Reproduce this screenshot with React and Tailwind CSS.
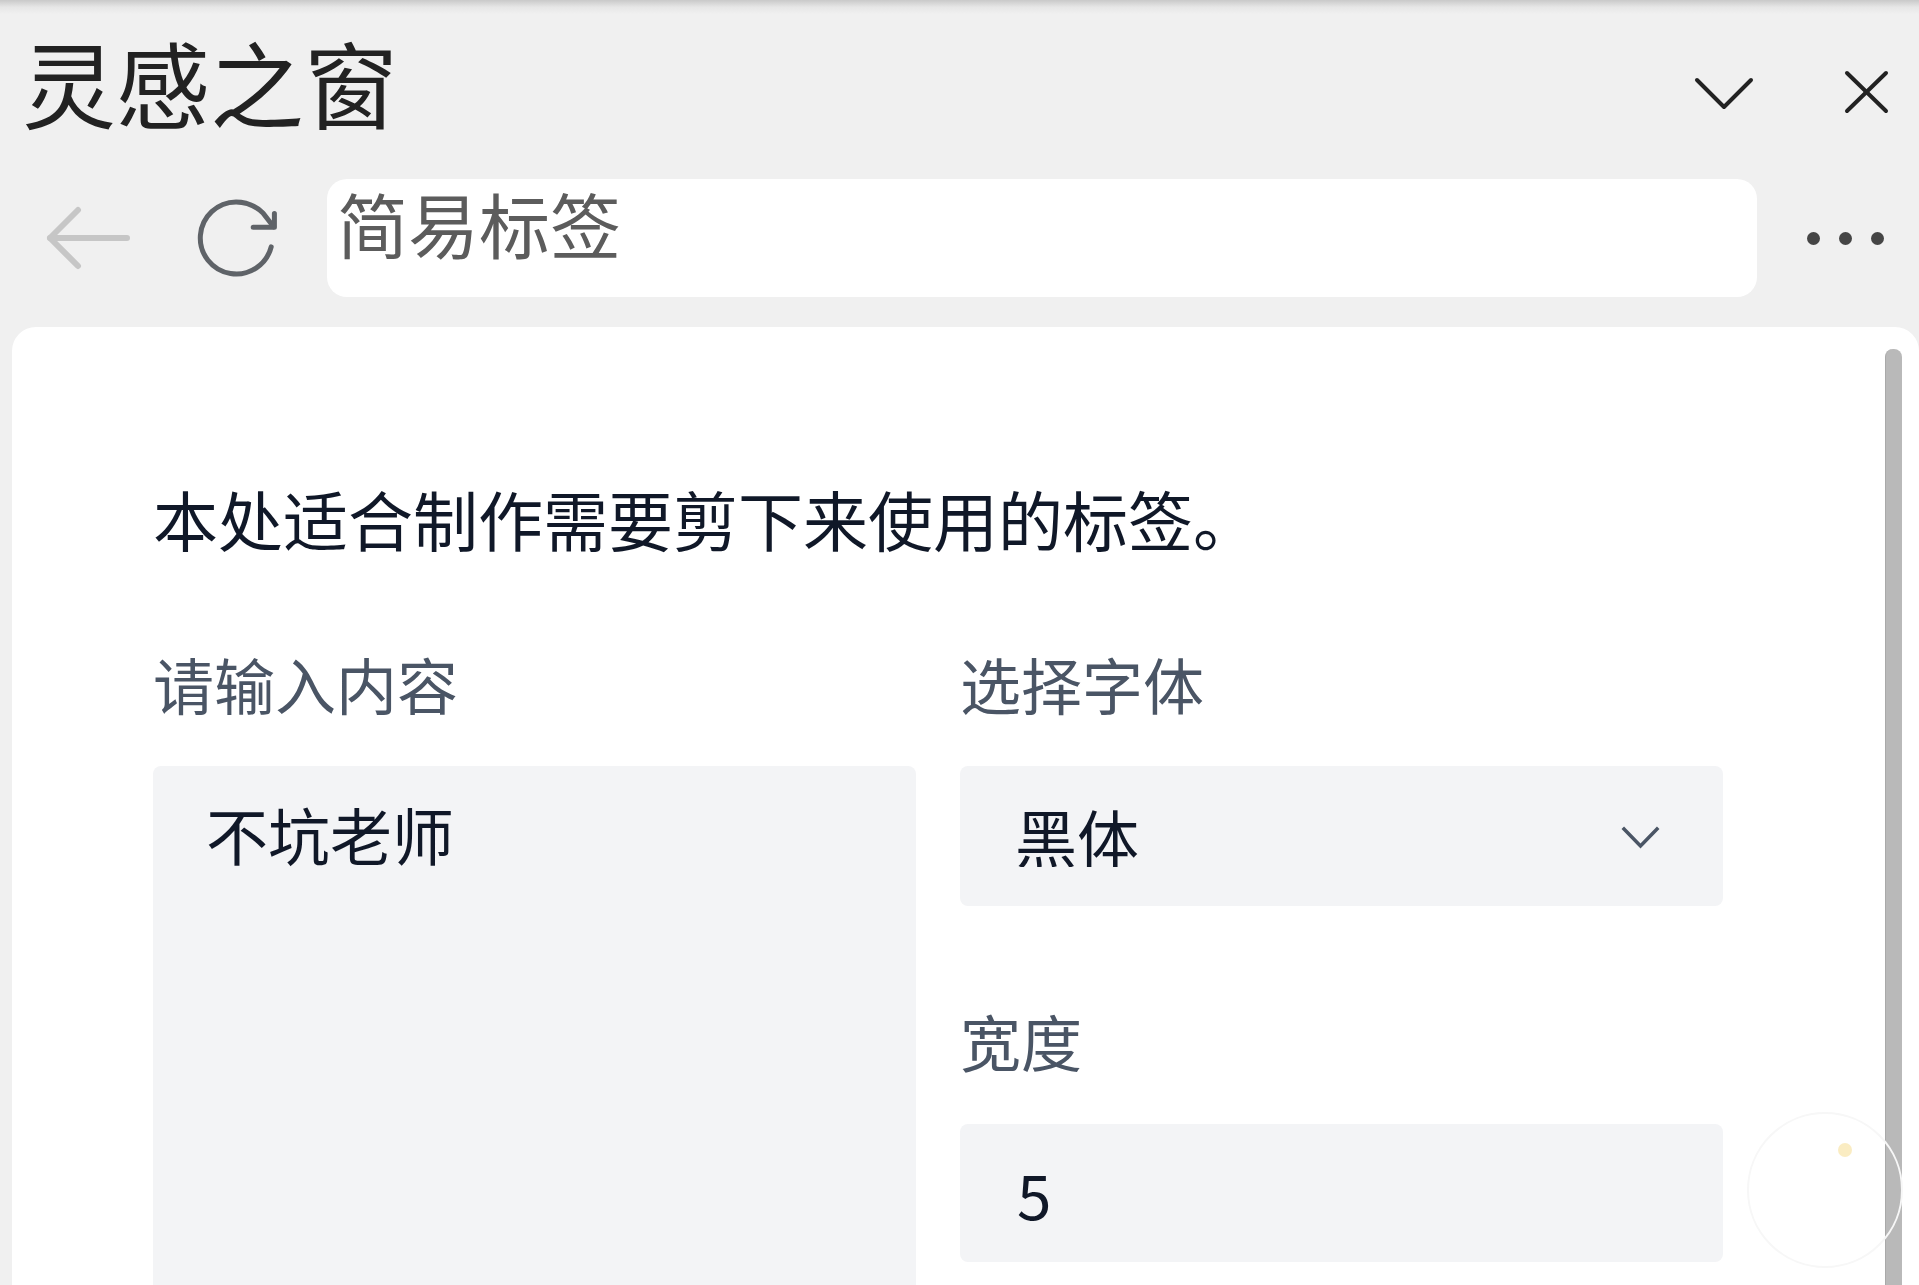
import React, { useState } from 'react';

const font = { fontFamily: '"Noto Sans CJK SC", "Noto Sans", sans-serif' };

const ChevronDown = ({ className }) => (
  <svg className={className} viewBox="0 0 62 35" fill="none" stroke="currentColor" strokeWidth="4" strokeLinecap="round" strokeLinejoin="round">
    <polyline points="4,4 31,31 58,4" />
  </svg>
);

const CloseIcon = ({ className }) => (
  <svg className={className} viewBox="0 0 47 46" fill="none" stroke="currentColor" strokeWidth="4" strokeLinecap="round">
    <line x1="4" y1="4" x2="43" y2="42" />
    <line x1="43" y1="4" x2="4" y2="42" />
  </svg>
);

const BackIcon = ({ className }) => (
  <svg className={className} viewBox="0 0 89 68" fill="none" stroke="currentColor" strokeWidth="6" strokeLinecap="round" strokeLinejoin="round">
    <line x1="6" y1="34" x2="83" y2="34" />
    <polyline points="34,6 6,34 34,62" />
  </svg>
);

const RefreshIcon = ({ className }) => (
  <svg className={className} viewBox="0 0 24 24" fill="none" stroke="currentColor" strokeWidth="1.25" strokeLinecap="round" strokeLinejoin="round">
    <path d="M20.8 14.2A9 9 0 1 1 12 3c2.52 0 4.93 1 6.74 2.74L21.4 9.2" />
    <path d="M21.6 5.9V9.3H16.3" />
  </svg>
);

const SelectChevron = ({ className }) => (
  <svg className={className} viewBox="0 0 39 25" fill="none" stroke="currentColor" strokeWidth="3.5" strokeLinecap="square">
    <polyline points="3,3 19.5,20 36,3" />
  </svg>
);

export default function App() {
  const [text, setText] = useState('不坑老师');
  const [fontName, setFontName] = useState('黑体');
  const [width, setWidth] = useState('5');

  return (
    <div className="relative w-[1919px] h-[1285px] bg-[#f0f0f0] overflow-hidden flex flex-col" style={font}>
      {/* top edge shadow */}
      <div className="h-[14px] shrink-0 bg-gradient-to-b from-[#c9c9c9] via-[#e6e6e6] to-[#f0f0f0]" />

      {/* title bar */}
      <div className="h-[165px] shrink-0 flex items-start">
        <h1 className="mt-[20px] pl-[22px] text-[94px] leading-none text-[#222222] font-normal">灵感之窗</h1>
        <div className="flex-1" />
        <button className="mt-[62px] text-[#222222]">
          <ChevronDown className="w-[62px] h-[35px]" />
        </button>
        <button className="mt-[55px] ml-[88px] mr-[29px] text-[#222222]">
          <CloseIcon className="w-[47px] h-[46px]" />
        </button>
      </div>

      {/* nav bar */}
      <div className="h-[118px] shrink-0 flex items-center">
        <button className="ml-[44px] text-[#c6c6c6]">
          <BackIcon className="w-[89px] h-[68px]" />
        </button>
        <button className="ml-[55px] text-[#5f6368]">
          <RefreshIcon className="w-[96px] h-[96px]" />
        </button>
        <div className="ml-[43px] w-[1430px] h-[118px] bg-white rounded-[20px] pl-[10px] pt-[8px]">
          <span className="text-[71px] leading-none text-[#5c5c5c]">简易标签</span>
        </div>
        <div className="ml-[50px] flex items-center gap-[19px]">
          <span className="w-[13px] h-[13px] rounded-full bg-[#454545]" />
          <span className="w-[13px] h-[13px] rounded-full bg-[#454545]" />
          <span className="w-[13px] h-[13px] rounded-full bg-[#454545]" />
        </div>
      </div>

      {/* content card */}
      <div className="mt-[30px] ml-[12px] flex-1 bg-white rounded-t-[24px] flex min-h-0">
        <div className="flex-1 pl-[141px] pt-[159px]">
          <p className="text-[65px] leading-none text-gray-900">本处适合制作需要剪下来使用的标签。</p>

          <div className="mt-[102px] w-[1570px] grid grid-cols-2 gap-x-[44px]">
            <div className="flex flex-col">
              <label className="text-[61px] leading-none text-gray-600">请输入内容</label>
              <textarea
                value={text}
                onChange={e => setText(e.target.value)}
                className="mt-[52px] h-[560px] w-full resize-none bg-gray-100 rounded-[8px] pl-[53px] pt-[37px] text-[62px] leading-none text-gray-900 outline-none"
                style={font}
              />
            </div>

            <div className="flex flex-col">
              <label className="text-[61px] leading-none text-gray-600">选择字体</label>
              <div className="relative mt-[52px]">
                <select
                  value={fontName}
                  onChange={e => setFontName(e.target.value)}
                  className="appearance-none w-full h-[140px] bg-gray-100 rounded-[8px] pl-[55px] text-[62px] leading-none text-gray-900 outline-none"
                  style={font}
                >
                  <option>黑体</option>
                  <option>宋体</option>
                  <option>楷体</option>
                </select>
                <SelectChevron className="absolute right-[63px] top-[60px] w-[39px] h-[25px] text-gray-600 pointer-events-none" />
              </div>

              <label className="mt-[104px] text-[61px] leading-none text-gray-600">宽度</label>
              <input
                type="text"
                value={width}
                onChange={e => setWidth(e.target.value)}
                className="mt-[53px] w-full h-[138px] bg-gray-100 rounded-[8px] pl-[57px] text-[62px] leading-none text-gray-900 outline-none"
                style={font}
              />
            </div>
          </div>
        </div>

        {/* scrollbar */}
        <div className="w-[17px] mt-[22px] bg-[#b9b9b9] border-l border-[#a9a9a9] rounded-t-[8px]" />
        <div className="w-[17px]" />
      </div>

      {/* faint watermark */}
      <div className="absolute left-[1747px] top-[1112px] w-[156px] h-[156px] rounded-full border-2 border-[#f7f7f7] pointer-events-none" />
      <div className="absolute left-[1838px] top-[1143px] w-[14px] h-[14px] rounded-full bg-[#f8e4a8] opacity-70 pointer-events-none" />
    </div>
  );
}
